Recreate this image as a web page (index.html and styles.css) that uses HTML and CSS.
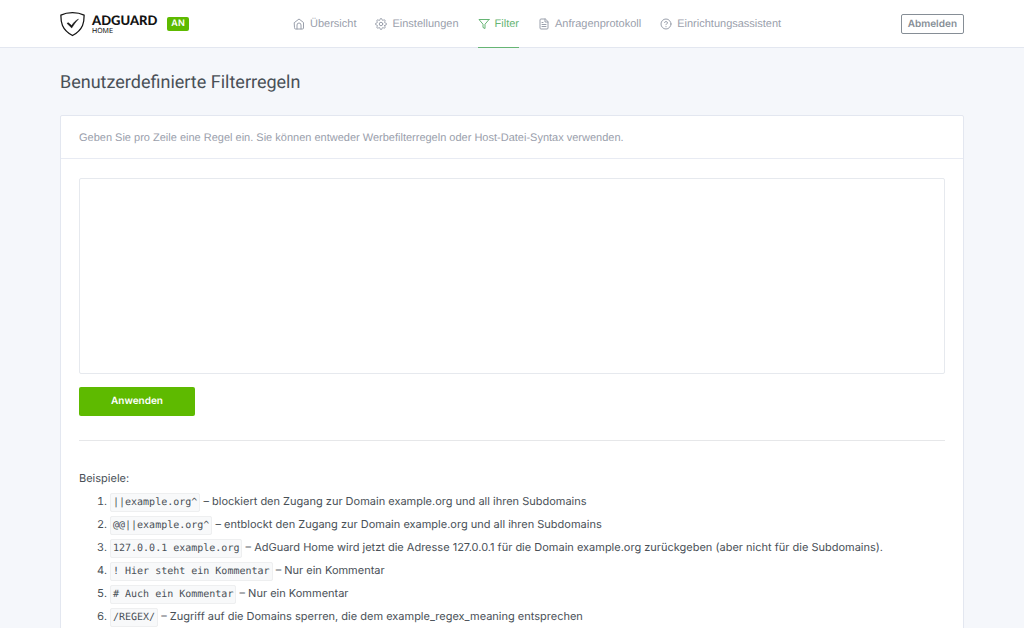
FILE: index.html
```
<!DOCTYPE html>
<html lang="de">
<head>
  <meta charset="UTF-8" />
  <meta name="viewport" content="width=device-width, initial-scale=1" />
  <title>AdGuard Home</title>
  <link rel="stylesheet" href="styles.css">
</head>
<body>

  <header class="header">
    <div class="container header-row">
      <div class="header-brand">
        <a href="#" class="logo">
          <svg class="logo-shield" viewBox="0 0 26 26" fill="none" stroke="#131313">
            <path d="M13 1.2C9.300 1.200 4.500 2 .9 3.800C.9 10.500 1.300 18.500 13 25C24.700 18.500 25.100 10.500 25.100 3.800C21.500 2 16.700 1.200 13 1.200Z" stroke-width="1.300" stroke-linejoin="round" />
            <path d="M7.200 12.300L8.700 11.700L12.100 14.600C14.200 11.500 16.300 9.400 19.200 7.900C16.600 10.600 14.300 13.600 12.200 17.100Z" fill="#131313" stroke-width="0.500" />
          </svg>
          <span class="logo-text">
            <strong>ADGUARD</strong>
            <small>HOME</small>
          </span>
        </a>
        <span class="badge">AN</span>
      </div>

      <!-- Navigation -->
      <nav class="nav">
        <a href="#" class="nav-link">
          <svg class="icon" viewBox="0 0 24 24"><path d="M3 9l9-7 9 7v11a2 2 0 0 1-2 2H5a2 2 0 0 1-2-2z" /><path d="M8 22v-8a4 4 0 0 1 8 0v8" /></svg>
          Übersicht
        </a>
        <a href="#" class="nav-link">
          <svg class="icon" viewBox="0 0 24 24"><circle cx="12" cy="12" r="3.500" /><path d="M19.400 15a1.650 1.650 0 0 0 .33 1.820l.06.06a2 2 0 0 1-2.830 2.830l-.06-.06a1.650 1.650 0 0 0-2.820 1.170V21a2 2 0 0 1-4 0v-.09A1.650 1.650 0 0 0 7.180 19.730l-.06.06a2 2 0 0 1-2.830-2.830l.06-.06A1.650 1.650 0 0 0 3.090 14H3a2 2 0 0 1 0-4h.09a1.650 1.650 0 0 0 1.180-2.820l-.06-.06a2 2 0 0 1 2.830-2.830l.06.06A1.650 1.650 0 0 0 10 3.090V3a2 2 0 0 1 4 0v.09a1.650 1.650 0 0 0 2.820 1.180l.06-.06a2 2 0 0 1 2.830 2.830l-.06.06A1.650 1.650 0 0 0 20.910 10H21a2 2 0 0 1 0 4h-.09a1.650 1.650 0 0 0-1.510 1z" /></svg>
          Einstellungen
        </a>
        <a href="#" class="nav-link active">
          <svg class="icon" viewBox="0 0 24 24"><path d="M22 3H2l8 9.460V19l4 2v-8.540L22 3z" /></svg>
          Filter
        </a>
        <a href="#" class="nav-link">
          <svg class="icon" viewBox="0 0 24 24"><path d="M14 2H6a2 2 0 0 0-2 2v16a2 2 0 0 0 2 2h12a2 2 0 0 0 2-2V8z" /><path d="M14 2v6h6M16 13H8M16 17H8M10 9H8" /></svg>
          Anfragenprotokoll
        </a>
        <a href="#" class="nav-link">
          <svg class="icon" viewBox="0 0 24 24"><circle cx="12" cy="12" r="10" /><path d="M9.090 9a3 3 0 0 1 5.830 1c0 2-3 3-3 3M12 17v.5" /></svg>
          Einrichtungsassistent
        </a>
      </nav>

      <button type="button" class="btn btn-outline">Abmelden</button>
    </div>
  </header>

  <main class="container">
    <h1 class="page-title">Benutzerdefinierte Filterregeln</h1>

    <div class="card">
      <div class="card-header">
        <label for="rules">Geben Sie pro Zeile eine Regel ein. Sie können entweder Werbefilterregeln oder Host-Datei-Syntax verwenden.</label>
      </div>
      <div class="card-body">
        <form>
          <textarea id="rules" class="rules"></textarea>
          <button type="submit" class="btn btn-success">Anwenden</button>
        </form>
        <hr>

        <!-- Beispiele -->
        <div class="examples">
          <p>Beispiele:</p>
          <ol>
            <li><code>||example.org^</code> – blockiert den Zugang zur Domain example.org und all ihren Subdomains</li>
            <li><code>@@||example.org^</code> – entblockt den Zugang zur Domain example.org und all ihren Subdomains</li>
            <li><code>127.0.0.1 example.org</code> – AdGuard Home wird jetzt die Adresse 127.0.0.1 für die Domain example.org zurückgeben (aber nicht für die Subdomains).</li>
            <li><code>! Hier steht ein Kommentar</code> – Nur ein Kommentar</li>
            <li><code># Auch ein Kommentar</code> – Nur ein Kommentar</li>
            <li><code>/REGEX/</code> – Zugriff auf die Domains sperren, die dem example_regex_meaning entsprechen</li>
          </ol>
        </div>
      </div>
    </div>
  </main>

</body>
</html>
```
FILE: styles.css
```
* {
  box-sizing: border-box;
}

body {
  margin: 0;
  font-family: Inter, sans-serif;
  font-size: 11px;
  line-height: 18px;
  color: #495057;
  background-color: #f5f7fb;
  text-rendering: geometricPrecision;
}

.container {
  max-width: 1024px;
  margin: 0 auto;
  padding: 0 60px;
}

.header {
  background-color: white;
  border-bottom: 1px solid #e3e7f0;
}

.header-row {
  display: flex;
  align-items: center;
  height: 47px;
}

.header-brand {
  display: flex;
  align-items: center;
  gap: 10px;
  flex: 0 0 233px;
}

.logo {
  display: flex;
  align-items: center;
  gap: 7px;
  color: #131313;
  text-decoration: none;
}

.logo-shield {
  width: 25px;
  height: 26px;
}

.logo-text {
  display: flex;
  flex-direction: column;
}

.logo-text strong {
  font-family: Lato, sans-serif;
  font-size: 13px;
  font-weight: 900;
  line-height: 14px;
}

.logo-text small {
  font-size: 7px;
  line-height: 8px;
}

.badge {
  padding: 0 4px;
  border-radius: 2px;
  font-size: 9px;
  font-weight: 600;
  line-height: 14px;
  color: white;
  background-color: #5eba00;
}

.nav {
  display: flex;
  align-self: flex-start;
  gap: 19px;
}

.nav-link {
  display: flex;
  align-items: center;
  gap: 5px;
  height: 48px;
  border-bottom: 1px solid transparent;
  font-family: "Liberation Sans", sans-serif;
  color: #9aa0ac;
  text-decoration: none;
  white-space: nowrap;
}

.nav-link.active {
  color: #66b574;
  border-bottom-color: #66b574;
}

.icon {
  width: 12px;
  height: 12px;
  fill: none;
  stroke: currentColor;
  stroke-width: 2;
  stroke-linecap: round;
  stroke-linejoin: round;
}

.btn {
  border: 1px solid transparent;
  border-radius: 2px;
  font-family: inherit;
  font-size: 10px;
  font-weight: 600;
  cursor: pointer;
  text-rendering: inherit;
}

.btn-outline {
  margin-left: auto;
  padding: 0 6px;
  line-height: 18px;
  color: #868e96;
  border-color: #868e96;
  background-color: white;
}

.btn-success {
  min-width: 116px;
  padding: 5px 12px;
  line-height: 17px;
  color: white;
  background-color: #5eba00;
}

.page-title {
  margin: 23px 0 20px;
  font-family: Roboto, sans-serif;
  font-size: 18px;
  font-weight: 400;
  line-height: 24px;
}

.card {
  background-color: white;
  border: 1px solid #e3e7f0;
  border-radius: 2px;
}

.card-header {
  padding: 13px 18px 11px;
  font-family: "Liberation Sans", sans-serif;
  color: #9aa0ac;
  border-bottom: 1px solid #e8ebf3;
}

.card-body {
  padding: 19px 18px;
}

.rules {
  display: block;
  width: 100%;
  height: 196px;
  margin-bottom: 13px;
  padding: 6px 9px;
  border: 1px solid #e6e9ee;
  border-radius: 2px;
  font-family: "DejaVu Sans Mono", monospace;
  font-size: 10px;
  resize: none;
}

hr {
  margin: 24px 0 28px;
  border: 0;
  border-top: 1px solid #e6e7e9;
}

.examples p {
  margin: 0 0 3px;
}

.examples ol {
  margin: 0;
  padding-left: 31px;
}

.examples li {
  line-height: 23px;
}

code {
  padding: 3px 2px;
  border: 1px solid #eeeff0;
  border-radius: 2px;
  font-family: "DejaVu Sans Mono", monospace;
  font-size: 10px;
  line-height: 1;
  background-color: #f8f9fa;
}
```
